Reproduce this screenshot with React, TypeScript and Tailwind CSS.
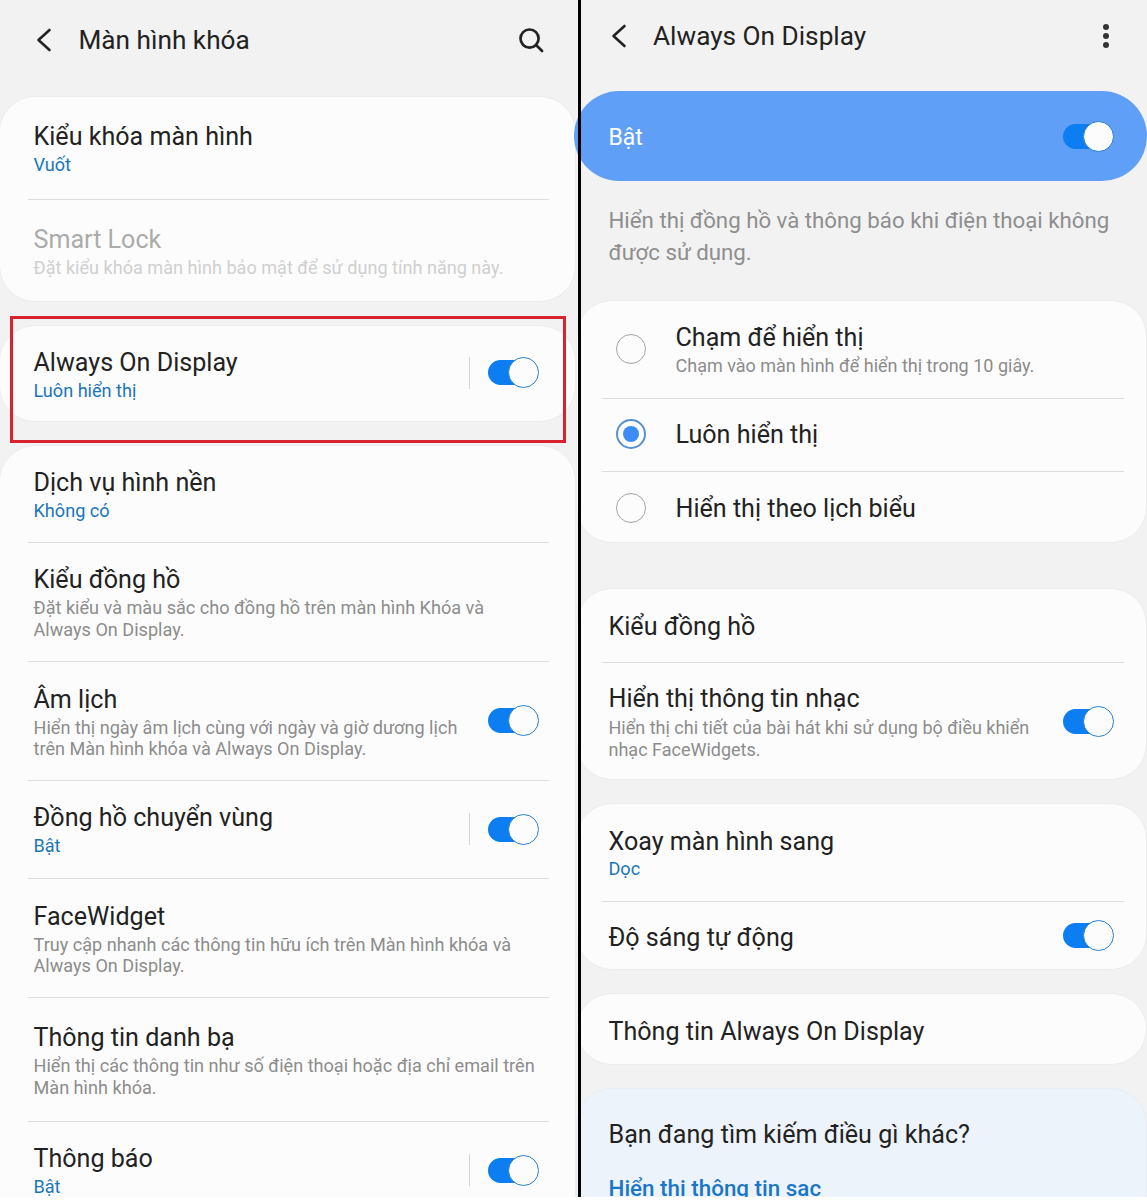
import type { ReactNode } from "react"

const Toggle = ({ divider }: { divider?: boolean }) => (
    <div className="flex items-center">
        {divider && <div className="w-px h-[32px] bg-[#d4d4d4] mr-[18px]" />}
        <div className="relative w-[51px] h-[31px]">
            <div className="absolute left-0 top-[3px] w-[46px] h-[25px] rounded-full bg-[#0d7df2]" />
            <div className="absolute right-0 top-0 w-[31px] h-[31px] rounded-full bg-[#fcfcfc] border-[1.5px] border-[#2a80cc]" />
        </div>
    </div>
)

const Radio = ({ checked }: { checked?: boolean }) => (
    <div className={checked
        ? "w-[30px] h-[30px] mb-[2px] rounded-full border-2 border-[#5a8fd0] flex items-center justify-center shrink-0"
        : "w-[30px] h-[30px] mb-[2px] rounded-full border-[1.5px] border-[#a3a3a3] shrink-0"}>
        {checked && <div className="w-[16px] h-[16px] rounded-full bg-[#3d8cf6]" />}
    </div>
)

const Card = ({ className, children }: { className: string, children: ReactNode }) => (
    <div className={"rounded-[36px] bg-[#fcfcfc] border border-[#ececec] " + className}>
        {children}
    </div>
)

type RowProps = {
    title: string
    value?: string
    desc?: string[]
    height: string
    top?: string
    disabled?: boolean
    toggle?: boolean
    divider?: boolean
    last?: boolean
}

const Row = ({ title, value, desc, height, top = "pt-[24px]", disabled, toggle, divider, last }: RowProps) => (
    <div className={"relative flex justify-between pl-[33.5px] pr-[34px] " + height}>
        <div className={top}>
            <div className={"text-[25.1px] leading-[32px] " + (disabled ? "text-[#ababab]" : "text-[#222222]")}>{title}</div>
            {value && <div className="text-[18.1px] leading-[23px] text-[#1a76b8]">{value}</div>}
            {desc && <div className="mt-px">
                {desc.map(line => (
                    <div key={line} className={"text-[18.1px] leading-[21.5px] " + (disabled ? "text-[#cfcfcf]" : "text-[#8c8c8c]")}>{line}</div>
                ))}
            </div>}
        </div>
        {toggle && <div className="self-center pr-[2px] pb-[2px]"><Toggle divider={divider} /></div>}
        {!last && <div className="absolute left-[28px] right-[26px] bottom-0 h-px bg-[#dddddd]" />}
    </div>
)

const RightRow = ({ title, value, desc, height, top = "pt-[22px]", toggle, last }: RowProps) => (
    <div className={"relative flex justify-between pl-[31.5px] pr-[32px] " + height}>
        <div className={top}>
            <div className="text-[25.1px] leading-[32px] text-[#222222]">{title}</div>
            {value && <div className="text-[18.1px] leading-[22px] text-[#1a76b8]">{value}</div>}
            {desc && <div className="mt-[2px]">
                {desc.map(line => (
                    <div key={line} className="text-[18px] leading-[21.5px] text-[#8c8c8c]">{line}</div>
                ))}
            </div>}
        </div>
        {toggle && <div className="self-center"><Toggle /></div>}
        {!last && <div className="absolute left-[25px] right-[22px] bottom-0 h-px bg-[#dddddd]" />}
    </div>
)

const RadioRow = ({ title, desc, checked, height, last }: { title: string, desc?: string, checked?: boolean, height: string, last?: boolean }) => (
    <div className={"relative flex items-center pl-[39px] " + height}>
        <Radio checked={checked} />
        <div className="ml-[29.5px]">
            <div className="text-[25.1px] leading-[32px] text-[#222222]">{title}</div>
            {desc && <div className="text-[18px] leading-[23px] text-[#8c8c8c]">{desc}</div>}
        </div>
        {!last && <div className="absolute left-[25px] right-[22px] bottom-0 h-px bg-[#dddddd]" />}
    </div>
)

const BackIcon = () => (
    <svg className="-mt-[2px]" width="18" height="26" viewBox="0 0 18 26" fill="none" stroke="#222222" strokeWidth="2.6" strokeLinecap="round" strokeLinejoin="round">
        <path d="M14.5 3 L3.5 13 L14.5 23" />
    </svg>
)

const LockScreenPanel = () => (
    <div className="relative w-[578px] h-full shrink-0 overflow-hidden">
        <div className="flex items-center justify-between h-[82px] pl-[35px] pr-[34px]">
            <div className="flex items-center gap-[25.5px]">
                <BackIcon />
                <span className="text-[26.2px] text-[#222222]">Màn hình khóa</span>
            </div>
            <svg className="-mt-[3px]" width="26" height="26" viewBox="0 0 27 27" fill="none" stroke="#222222" strokeWidth="2.8" strokeLinecap="round">
                <circle cx="12" cy="12" r="9.4" />
                <path d="M19 19 L25 25" />
            </svg>
        </div>
        <div className="flex flex-col gap-[23px] pt-[14px]">
            <Card className="-ml-px mr-[2px]">
                <Row title="Kiểu khóa màn hình" value="Vuốt" height="h-[103px]" />
                <Row title="Smart Lock" desc={["Đặt kiểu khóa màn hình bảo mật để sử dụng tính năng này."]} height="h-[101px]" disabled last />
            </Card>
            <Card className="-ml-px mr-[2px]">
                <Row title="Always On Display" value="Luôn hiển thị" height="h-[95px]" top="pt-[21px]" toggle divider last />
            </Card>
            <Card className="-ml-px mr-[2px] h-[800px]">
                <Row title="Dịch vụ hình nền" value="Không có" height="h-[97px]" top="pt-[21px]" />
                <Row title="Kiểu đồng hồ" desc={["Đặt kiểu và màu sắc cho đồng hồ trên màn hình Khóa và", "Always On Display."]} height="h-[119px]" top="pt-[21px]" />
                <Row title="Âm lịch" desc={["Hiển thị ngày âm lịch cùng với ngày và giờ dương lịch", "trên Màn hình khóa và Always On Display."]} height="h-[119px]" top="pt-[21.5px]" toggle />
                <Row title="Đồng hồ chuyển vùng" value="Bật" height="h-[98px]" top="pt-[21px]" toggle divider />
                <Row title="FaceWidget" desc={["Truy cập nhanh các thông tin hữu ích trên Màn hình khóa và", "Always On Display."]} height="h-[119px]" top="pt-[21.5px]" />
                <Row title="Thông tin danh bạ" desc={["Hiển thị các thông tin như số điện thoại hoặc địa chỉ email trên", "Màn hình khóa."]} height="h-[124px]" top="pt-[24px]" />
                <Row title="Thông báo" value="Bật" height="h-[98px]" top="pt-[21px]" toggle divider last />
            </Card>
        </div>
        {/* red highlight box drawn over the card */}
        <div className="absolute left-[10px] top-[316px] w-[556px] h-[127px] border-[3px] border-[#d8232f]" />
    </div>
)

const AodPanel = () => (
    <div className="relative flex-1 h-full">
        <div className="flex items-center justify-between h-[74px] pl-[29px] pr-[38px]">
            <div className="flex items-center gap-[25px]">
                <BackIcon />
                <span className="text-[26.2px] text-[#222222]">Always On Display</span>
            </div>
            <div className="flex flex-col gap-[3px] -mt-[2px]">
                <div className="w-[6px] h-[6px] rounded-full bg-[#333333]" />
                <div className="w-[6px] h-[6px] rounded-full bg-[#333333]" />
                <div className="w-[6px] h-[6px] rounded-full bg-[#333333]" />
            </div>
        </div>
        <div className="flex items-center justify-between h-[90px] mt-[17px] -ml-[7px] pl-[34.5px] pr-[33px] rounded-[45px] bg-[#609ff8]">
            <span className="text-[23px] leading-[32px] mt-[4px] text-white">Bật</span>
            <Toggle />
        </div>
        <div className="pl-[27.5px] pt-[23px] text-[22.25px] leading-[32px] text-[#8e8e8e]">
            <div>Hiển thị đồng hồ và thông báo khi điện thoại không</div>
            <div>được sử dụng.</div>
        </div>
        <div className="flex flex-col gap-[23px] pt-[32px] -ml-[5px]">
            <Card className="h-[243px] mb-[22px]">
                <RadioRow title="Chạm để hiển thị" desc="Chạm vào màn hình để hiển thị trong 10 giây." height="h-[98px] pb-px" />
                <RadioRow title="Luôn hiển thị" checked height="h-[73px] pb-[2px]" />
                <RadioRow title="Hiển thị theo lịch biểu" height="h-[72px] pt-px" last />
            </Card>
            <Card className="h-[192px]">
                <RightRow title="Kiểu đồng hồ" height="h-[74px]" />
                <RightRow title="Hiển thị thông tin nhạc" desc={["Hiển thị chi tiết của bài hát khi sử dụng bộ điều khiển", "nhạc FaceWidgets."]} height="h-[116px]" top="pt-[20px]" toggle last />
            </Card>
            <Card className="h-[167px]">
                <RightRow title="Xoay màn hình sang" value="Dọc" height="h-[98px]" top="pt-[22px]" />
                <RightRow title="Độ sáng tự động" height="h-[67px]" top="pt-[20px]" toggle last />
            </Card>
            <Card className="h-[72px]">
                <RightRow title="Thông tin Always On Display" height="h-[70px]" top="pt-[22px]" last />
            </Card>
            <div className="h-[200px] rounded-[36px] bg-[#edf3fa] border border-[#e8edf3] pl-[31.5px] pt-[30px]">
                <div className="text-[25.1px] leading-[32px] text-[#222222]">Bạn đang tìm kiếm điều gì khác?</div>
                <div className="mt-[21px] text-[22.4px] leading-[32px] font-medium text-[#1a76c8]">Hiển thị thông tin sạc</div>
            </div>
        </div>
    </div>
)

const App = () => {
    return (
        <div className="w-[1147px] h-[1200px] bg-white font-['Roboto',sans-serif]">
            {/* screenshot stops a few px short of the page bottom */}
            <div className="flex h-[1197px] overflow-hidden bg-[#f2f2f2]">
                <LockScreenPanel />
                <div className="relative z-10 w-[3px] h-full bg-black shrink-0" />
                <AodPanel />
            </div>
        </div>
    )
}

export default App
